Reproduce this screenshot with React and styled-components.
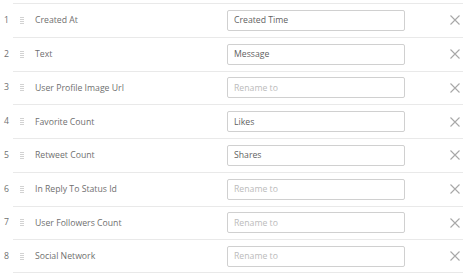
import React from 'react';
import styled, { createGlobalStyle } from 'styled-components';

const GlobalStyle = createGlobalStyle`
    body {
        margin: 0;
        background: #fff;
        font-family: "Open Sans", "Liberation Sans", sans-serif;
    }
`;

const List = styled.div`
    padding-top: 3px;
    width: 468px;
`;

const Row = styled.div`
    display: flex;
    align-items: stretch;
    height: 33.75px;
`;

const Index = styled.div`
    width: 13px;
    display: flex;
    align-items: center;
    justify-content: center;
    font-size: 8.7px;
    color: #6f6f6f;
`;

const Body = styled.div`
    flex: 1;
    margin-right: 5px;
    display: flex;
    align-items: center;
    box-sizing: border-box;
    border-top: 1px solid #e9e9e9;
    border-bottom: ${p => (p.$last ? '1px solid #e9e9e9' : 'none')};
`;

const Handle = styled.div`
    margin-left: 7px;
    width: 4px;
    display: flex;
    flex-direction: column;
    gap: 1px;

    span {
        height: 1px;
        background: #d2d2d2;
    }
`;

const Label = styled.div`
    margin-left: 11px;
    width: 192px;
    font-size: 8.7px;
    color: #6f6f6f;
    white-space: nowrap;
`;

const Field = styled.input`
    box-sizing: border-box;
    width: 178px;
    height: 21px;
    border: 1px solid #d0d0d0;
    border-radius: 2px;
    padding: 0 6px;
    font-family: inherit;
    font-size: 8.7px;
    color: #5f5f5f;
    outline: none;

    &::placeholder {
        color: #bbb;
    }
`;

const Remove = styled.button`
    margin-left: auto;
    margin-right: 3px;
    width: 10px;
    height: 10px;
    padding: 0;
    border: none;
    background: none;
    display: flex;
    cursor: pointer;
`;

const fields = [
    { name: 'Created At', value: 'Created Time' },
    { name: 'Text', value: 'Message' },
    { name: 'User Profile Image Url', value: '' },
    { name: 'Favorite Count', value: 'Likes' },
    { name: 'Retweet Count', value: 'Shares' },
    { name: 'In Reply To Status Id', value: '' },
    { name: 'User Followers Count', value: '' },
    { name: 'Social Network', value: '' },
];

const Grip = () => (
    <Handle>
        {Array.from({ length: 4 }).map((_, i) => <span key={i} />)}
    </Handle>
);

const Cross = () => (
    <svg width="10" height="10" viewBox="0 0 10 10">
        <path d="M0.5 0.5L9.5 9.5M9.5 0.5L0.5 9.5" stroke="#a8a8a8" strokeWidth="1.1" fill="none" />
    </svg>
);

const App = () => (
    <>
        <GlobalStyle />
        <List>
            {fields.map((f, i) => (
                <Row key={f.name}>
                    <Index>{i + 1}</Index>
                    <Body $last={i === fields.length - 1}>
                        <Grip />
                        <Label>{f.name}</Label>
                        <Field defaultValue={f.value} placeholder="Rename to" />
                        <Remove><Cross /></Remove>
                    </Body>
                </Row>
            ))}
        </List>
    </>
);

export default App;
